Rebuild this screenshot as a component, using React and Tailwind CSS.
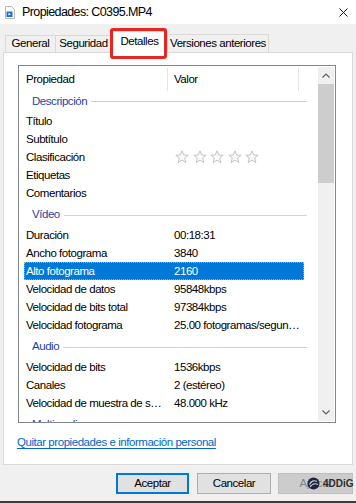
import React from "react";

const groups = [
  {
    name: "Descripción",
    first: true,
    items: [
      ["Título", ""],
      ["Subtítulo", ""],
      ["Clasificación", "stars"],
      ["Etiquetas", ""],
      ["Comentarios", ""],
    ],
  },
  {
    name: "Vídeo",
    items: [
      ["Duración", "00:18:31"],
      ["Ancho fotograma", "3840"],
      ["Alto fotograma", "2160", true],
      ["Velocidad de datos", "95848kbps"],
      ["Velocidad de bits total", "97384kbps"],
      ["Velocidad fotograma", "25.00 fotogramas/segundo"],
    ],
  },
  {
    name: "Audio",
    items: [
      ["Velocidad de bits", "1536kbps"],
      ["Canales", "2 (estéreo)"],
      ["Velocidad de muestra de sonido", "48.000 kHz"],
    ],
  },
  {
    name: "Multimedia",
    items: [],
  },
];

function Star() {
  return (
    <svg width="14" height="14" viewBox="0 0 14 14">
      <path
        d="M7 0.8 L8.7 5 L13.2 5.2 L9.7 8 L10.9 12.6 L7 10.1 L3.1 12.6 L4.3 8 L0.8 5.2 L5.3 5 Z"
        fill="#fafafa"
        stroke="#c4c4c4"
        strokeWidth="1"
        strokeLinejoin="round"
      />
    </svg>
  );
}

function Row({ label, value, selected }) {
  return (
    <div
      className={`flex items-center h-[18px] w-[280px] ml-[5px] ${
        selected ? "bg-[#0078d7] text-white outline outline-1 outline-dotted outline-[#e8a040] -outline-offset-1" : ""
      }`}
    >
      <div className="w-[144px] pl-[2px] pr-[2px] truncate leading-[14px]">{label}</div>
      <div className="w-[136px] pl-[6px] pr-[4px] truncate leading-[14px]">
        {value === "stars" ? (
          <div className="flex gap-[3.5px] pl-[1px]">
            <Star />
            <Star />
            <Star />
            <Star />
            <Star />
          </div>
        ) : (
          value
        )}
      </div>
    </div>
  );
}

function Group({ name, first }) {
  return (
    <div
      className={`flex items-center w-[288px] pl-[13px] text-[#1f43a8] ${
        first ? "h-[21px]" : "h-[24px] pt-[2px]"
      }`}
    >
      <span>{name}</span>
      <div className="flex-1 h-px bg-[#c6d3ea] ml-[4px]" />
    </div>
  );
}

export default function App() {
  return (
    <div className="w-[356px] h-[503px] bg-[#f0f0f0] flex flex-col overflow-hidden relative font-['Liberation_Sans',Arial,sans-serif] text-[11.5px] tracking-[-0.45px] text-black leading-none">
      {/* title bar */}
      <div className="h-[24px] bg-white flex items-center pl-[5px] pr-[8px]">
        <svg width="10" height="13" viewBox="0 0 10 13">
          <path d="M0.5 0.5 H6.5 L9.5 3.5 V12.5 H0.5 Z" fill="#fff" stroke="#b8b8b8" />
          <rect x="1.5" y="5.5" width="6" height="5.5" fill="#1f6fc5" />
          <path d="M3.5 6.8 L6 8.2 L3.5 9.6 Z" fill="#fff" />
        </svg>
        <span className="ml-[7px] text-[12.5px] tracking-[-0.6px]">Propiedades: C0395.MP4</span>
        <div className="flex-1" />
        <svg width="9" height="9" viewBox="0 0 9 9">
          <path d="M0.5 0.5 L8.5 8.5 M8.5 0.5 L0.5 8.5" stroke="#111" strokeWidth="1" />
        </svg>
      </div>

      {/* tabs */}
      <div className="h-[28px] flex items-end pl-[5px] relative z-10">
        <div className="w-[51px] h-[17px] border border-b-0 border-[#d9d9d9] bg-[#f0f0f0] flex items-center justify-center">
          General
        </div>
        <div className="-ml-px w-[57px] h-[17px] border border-b-0 border-[#d9d9d9] bg-[#f0f0f0] flex items-center justify-center">
          Seguridad
        </div>
        <div className="-ml-px w-[57px] h-[22px] -mb-px border border-b-0 border-[#d9d9d9] bg-white flex items-center justify-center pb-[1px] relative z-10">
          Detalles
        </div>
        <div className="-ml-px w-[102px] h-[18px] border border-b-0 border-[#d9d9d9] bg-[#f0f0f0] flex items-center justify-center">
          Versiones anteriores
        </div>
        {/* red annotation */}
        <div className="absolute left-[110px] top-[4px] w-[57px] h-[31px] border-[3px] border-[#e8251e] rounded-[3px] pointer-events-none z-20" />
      </div>

      {/* panel */}
      <div className="ml-[3px] w-[350px] h-[413px] bg-white border border-[#d9d9d9] pl-[14px] pt-[12px]">
        <div className="w-[318px] h-[358px] border border-[#828790] flex overflow-hidden">
          <div className="flex-1 overflow-hidden pt-[1px]">
            {/* header */}
            <div className="flex h-[24px] items-center ml-[5px] w-[280px]">
              <div className="w-[143px] pl-[2px] pt-[2px]">Propiedad</div>
              <div className="w-px h-[23px] bg-[#e5e5e5] self-end" />
              <div className="w-[130px] pl-[6px] pt-[2px]">Valor</div>
              <div className="w-px h-[23px] bg-[#e5e5e5] self-end" />
            </div>
            {groups.map((g) => (
              <div key={g.name}>
                <Group name={g.name} first={g.first} />
                {g.items.map(([label, value, sel]) => (
                  <Row key={label} label={label} value={value} selected={sel} />
                ))}
              </div>
            ))}
          </div>
          {/* scrollbar */}
          <div className="w-[16px] mr-[1px] my-[1px] bg-[#f0f0f0] flex flex-col">
            <div className="h-[17px] flex items-center justify-center">
              <svg width="8" height="5" viewBox="0 0 8 5">
                <path d="M0.5 4.5 L4 1 L7.5 4.5" fill="none" stroke="#606060" strokeWidth="1.2" />
              </svg>
            </div>
            <div className="h-[99px] bg-[#cdcdcd]" />
            <div className="flex-1" />
            <div className="h-[17px] flex items-center justify-center">
              <svg width="8" height="5" viewBox="0 0 8 5">
                <path d="M0.5 0.5 L4 4 L7.5 0.5" fill="none" stroke="#606060" strokeWidth="1.2" />
              </svg>
            </div>
          </div>
        </div>
        <div className="mt-[11px] -ml-px text-[#0066cc] underline underline-offset-[2px] leading-[16px]">
          Quitar propiedades e información personal
        </div>
      </div>

      {/* buttons */}
      <div className="h-[36px] flex items-start pt-[8px] pl-[116px]">
        <div className="w-[73px] h-[21px] bg-[#e1e1e1] border-2 border-[#0078d7] flex items-center justify-center">
          Aceptar
        </div>
        <div className="ml-[8px] w-[74px] h-[21px] bg-[#e1e1e1] border border-[#adadad] flex items-center justify-center">
          Cancelar
        </div>
        <div className="ml-[7px] w-[75px] h-[21px] bg-[#cccccc] border border-[#bfbfbf] flex items-center justify-center text-[#838383] relative">
          Aplicar
          <div className="absolute left-[28px] top-[3px] flex items-center gap-[3px]">
            <svg width="13" height="13" viewBox="0 0 13 13">
              <circle cx="6.5" cy="6.5" r="6" fill="#1d2540" />
              <path d="M2.5 7.5 C4 4, 7 3, 10 4.5 M3 10 C5 7, 8 6, 11 7.5" fill="none" stroke="#d0d0d0" strokeWidth="1.1" />
            </svg>
            <span className="font-bold text-[10px] tracking-[0px] text-[#2e2e2e]">4DDiG</span>
          </div>
        </div>
      </div>
      <div className="flex-1 bg-[#34423a]" />
    </div>
  );
}
